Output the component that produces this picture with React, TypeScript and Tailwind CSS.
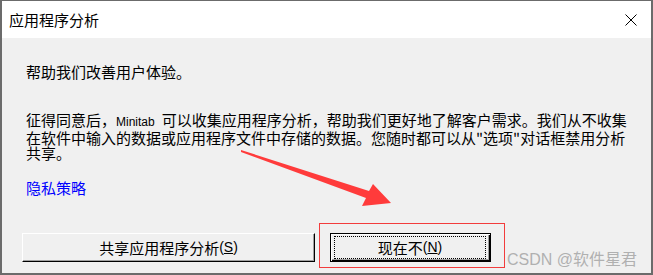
import React from "react";

const CJK = "font-['Noto_Sans_CJK_SC',sans-serif]";

function CloseIcon() {
  return (
    <svg width="12" height="12" viewBox="0 0 12 12" className="block">
      <path d="M0.5 0.5 L11.5 11.5 M11.5 0.5 L0.5 11.5" stroke="#000" strokeWidth="1" fill="none" />
    </svg>
  );
}

export default function App() {
  return (
    <div
      className={`relative w-[653px] h-[275px] overflow-hidden flex flex-col bg-[#f0f0f0] border-[#6b6b6b] border-t border-x-2 border-b-2 text-black ${CJK}`}
    >
      {/* title bar */}
      <div className="h-[37px] shrink-0 bg-white flex items-center justify-between pl-[7px] pr-[14px]">
        <span className="text-[15px] leading-[15px]">应用程序分析</span>
        <CloseIcon />
      </div>

      {/* body */}
      <div className="flex-1 flex flex-col pl-[20px] text-[15px] leading-[15px]">
        <p className="pl-[4px] pt-[26px] whitespace-nowrap">帮助我们改善用户体验。</p>
        <p className="pl-[4px] mt-[33px] whitespace-nowrap">
          征得同意后，
          <span className="font-['Liberation_Sans',sans-serif] text-[12px]">Minitab</span>
          <span className="inline-block w-[7px]" />
          可以收集应用程序分析，帮助我们更好地了解客户需求。我们从不收集
          <br />
          在软件中输入的数据或应用程序文件中存储的数据。您随时都可以从"选项"对话框禁用分析
          <br />
          共享。
        </p>
        <a className="pl-[4px] mt-[20px] text-[#0000ff] w-fit">隐私策略</a>

        <div className="mt-[38px] flex gap-[15px]">
          <button className="w-[293px] h-[29px] flex items-center justify-center bg-[#f0f0f0] border-t border-l border-t-white border-l-white border-b border-r border-b-black border-r-black shadow-[inset_-1px_-1px_0_#a0a0a0] text-[15px] leading-[15px]">
            共享应用程序分析
            <span className="font-['Liberation_Sans',sans-serif] text-[14px]">
              (<span className="underline">S</span>)
            </span>
          </button>
          <button className="w-[161px] h-[29px] flex bg-[#f0f0f0] border border-black shadow-[inset_1px_1px_0_#fff,inset_-1px_-1px_0_#000,inset_-2px_-2px_0_#a0a0a0] pt-[2px] pl-[3px] pr-[4px] pb-[2px]">
            <span className="flex-1 flex items-center justify-center border border-dotted border-black text-[15px] leading-[15px]">
              现在不
              <span className="font-['Liberation_Sans',sans-serif] text-[14px]">
                (<span className="underline">N</span>)
              </span>
            </span>
          </button>
        </div>
      </div>

      {/* annotation overlays */}
      <div className="absolute left-[317px] top-[222px] w-[186px] h-[45px] border border-[#f23c3c] pointer-events-none" />
      <svg
        className="absolute left-[-2px] top-[-1px] pointer-events-none"
        width="653"
        height="275"
        viewBox="0 0 653 275"
      >
        <polygon
          points="241,150 369,191 373,184 391,203 362,206 366,198 241,152"
          fill="#ff3b3b"
        />
      </svg>
      <div className="absolute right-[14px] top-[249px] text-[16px] leading-[16px] text-[#b0b0b0] whitespace-nowrap pointer-events-none">
        <span className="font-['Liberation_Sans',sans-serif]">CSDN @</span>软件星君
      </div>
    </div>
  );
}
